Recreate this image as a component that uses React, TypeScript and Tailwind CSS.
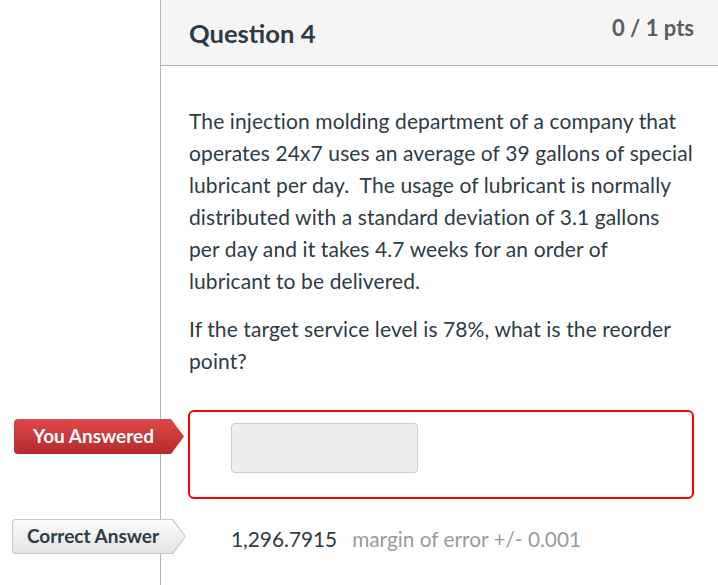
// App.tsx
const font = { fontFamily: "Lato, 'Noto Sans', sans-serif" };

const arrowClip = "polygon(0 0, calc(100% - 13px) 0, 100% 50%, calc(100% - 13px) 100%, 0 100%)";

function YouAnsweredBadge() {
    return (
        <div
            className="relative z-10 ml-[14px] flex h-[35px] w-[170px] shrink-0 items-center rounded-l-[4px] bg-gradient-to-b from-[#e0474a] to-[#b52a2b] pl-[19px] text-[19px] font-bold text-white"
            style={{ clipPath: arrowClip }}
        >
            You Answered
        </div>
    );
}

function CorrectAnswerBadge() {
    return (
        <div
            className="relative z-10 ml-[12px] h-[35px] w-[174px] shrink-0 rounded-l-[4px] bg-[#c8c8c8] p-px"
            style={{ clipPath: arrowClip }}
        >
            <div
                className="flex h-full w-full items-center rounded-l-[3px] bg-gradient-to-b from-[#fbfbfb] to-[#e4e4e4] pl-[14px] text-[19px] font-bold text-[#2d3b45]"
                style={{ clipPath: arrowClip }}
            >
                Correct Answer
            </div>
        </div>
    );
}

export default function App() {
    return (
        <div className="h-[585px] w-[718px] overflow-hidden bg-white text-[#2d3b45]" style={font}>
            {/* header */}
            <div className="flex">
                <div className="w-[160px] shrink-0" />
                <div className="flex h-[66px] flex-1 items-start justify-between border-b border-l border-[#b4b4b4] bg-[#f5f5f5] pl-[28px] pr-[24px]">
                    <h2 className="mt-[15px] text-[25.6px] font-bold leading-[36px]">Question 4</h2>
                    <div className="mt-[13px] text-[22px] font-bold leading-[30px] text-[#555e66]">0 / 1 pts</div>
                </div>
            </div>

            {/* question text */}
            <div className="flex">
                <div className="w-[160px] shrink-0" />
                <div className="flex-1 border-l border-[#b4b4b4] pl-[28px] pr-[16px] pt-[39px] text-[21px] leading-[32px] tracking-[0.1px]">
                    <p>
                        The injection molding department of a company that
                        <br />
                        operates 24x7 uses an average of 39 gallons of special
                        <br />
                        lubricant per day.&nbsp; The usage of lubricant is normally
                        <br />
                        distributed with a standard deviation of 3.1 gallons
                        <br />
                        per day and it takes 4.7 weeks for an order of
                        <br />
                        lubricant to be delivered.
                    </p>
                    <p className="mt-[16px]">
                        If the target service level is 78%, what is the reorder
                        <br />
                        point?
                    </p>
                    <div className="h-[33px]" />
                </div>
            </div>

            {/* you answered */}
            <div className="flex">
                <div className="w-[160px] shrink-0 pt-[9px]">
                    <YouAnsweredBadge />
                </div>
                <div className="flex-1 border-l border-[#b4b4b4] pl-[27px] pr-[24px]">
                    <div className="h-[89px] rounded-[6px] border-2 border-[#ff0000] pl-[41px] pt-[11px]">
                        <div className="h-[50px] w-[187px] rounded-[4px] border border-[#cccccc] bg-[#eeeeee]" />
                    </div>
                </div>
            </div>

            {/* correct answer */}
            <div className="flex">
                <div className="w-[160px] shrink-0 pt-[20px]">
                    <CorrectAnswerBadge />
                </div>
                <div className="flex-1 border-l border-[#b4b4b4] pl-[70px] pt-[24px] pb-[40px]">
                    <div className="flex items-baseline text-[20.8px] leading-[32px]">
                        <span>1,296.7915</span>
                        <span className="ml-[15px] text-[#9a9a9a]">margin of error +/- 0.001</span>
                    </div>
                </div>
            </div>
        </div>
    );
}
